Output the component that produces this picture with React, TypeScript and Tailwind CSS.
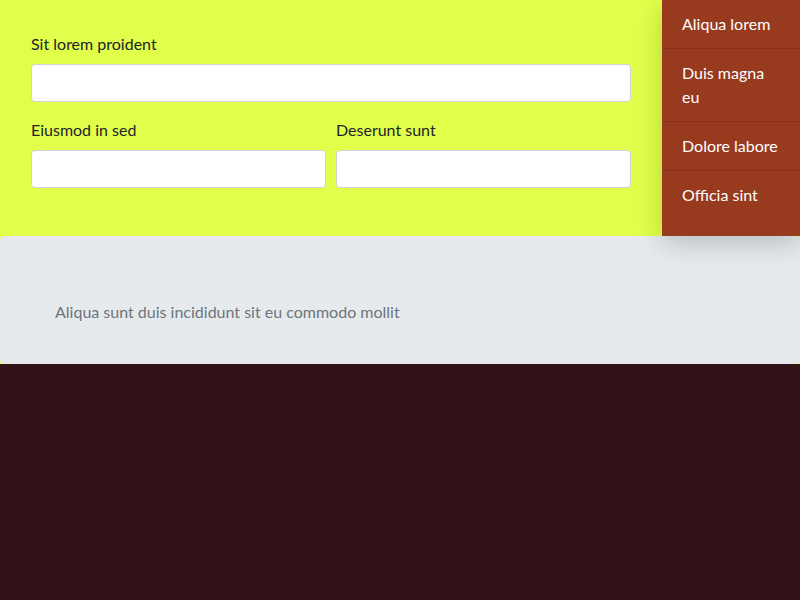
import React from "react";

export default function App() {
  const items = ["Aliqua lorem", "Duis magna eu", "Dolore labore", "Officia sint"];
  return (
    <div
      className="min-h-[600px] w-full bg-[#321318] text-base"
      style={{ fontFamily: "Lato, 'Liberation Sans', sans-serif" }}
    >
      <div className="bg-[#e0fe4a]">
        <div className="flex">
          <form className="flex-1 px-[31px] pt-8 pb-12 text-[#212529]">
            <label className="block leading-6 mb-2">Sit lorem proident</label>
            <input className="block w-full h-[38px] rounded border border-[#ced4da] bg-white" />
            <div className="mt-4 flex gap-[10px]">
              <div className="flex-1">
                <label className="block leading-6 mb-2">Eiusmod in sed</label>
                <input className="block w-full h-[38px] rounded border border-[#ced4da] bg-white" />
              </div>
              <div className="flex-1">
                <label className="block leading-6 mb-2">Deserunt sunt</label>
                <input className="block w-full h-[38px] rounded border border-[#ced4da] bg-white" />
              </div>
            </div>
          </form>
          <aside className="relative z-10 w-[138px] bg-[#983a1e] text-white shadow-[0_8px_24px_rgba(0,0,0,0.18)]">
            {items.map((t, i) => (
              <div
                key={t}
                className={
                  "px-5 py-3 leading-6 " +
                  (i < items.length - 1 ? "border-b border-[#86321a]" : "")
                }
              >
                {t}
              </div>
            ))}
          </aside>
        </div>
        <div className="rounded bg-[#e6eaed] pt-16 pb-10 pl-[55px] leading-6 text-[#6c757d]">
          Aliqua sunt duis incididunt sit eu commodo mollit
        </div>
      </div>
    </div>
  );
}
